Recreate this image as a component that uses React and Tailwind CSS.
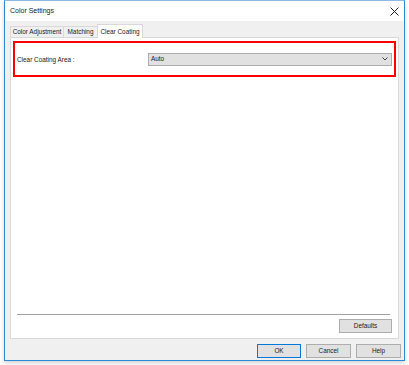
import React from 'react';

const font = { fontFamily: '"Liberation Sans", Arial, sans-serif' };

function Tab({ label, active, w }) {
  if (active) {
    return (
      <div className={`relative z-10 -mb-[1px] h-[14px] flex justify-center items-start pt-[2px] bg-white border border-b-0 border-[#d9d9d9] text-[6.4px] text-[#1a1a1a] ${w}`}>
        {label}
      </div>
    );
  }
  return (
    <div className={`h-[11px] flex justify-center items-center bg-[#f0f0f0] border border-b-0 border-[#d9d9d9] -mr-[1px] text-[6.4px] text-[#1a1a1a] ${w}`}>
      {label}
    </div>
  );
}

function Btn({ label, primary, w }) {
  return (
    <div
      className={`h-[14px] flex items-center justify-center text-[6.4px] text-[#1a1a1a] bg-[#e1e1e1] border ${primary ? 'border-[#0078d7]' : 'border-[#adadad]'} ${w}`}
    >
      {label}
    </div>
  );
}

export default function App() {
  return (
    <div className="w-[409px] h-[365px] bg-white" style={font}>
      <div className="ml-[4px] w-[401px] h-[361px] flex flex-col border border-[#2b8ad8] border-t-[#8cbbe8] shadow-[0_2px_4px_rgba(0,0,0,0.18)]">
        {/* title bar */}
        <div className="h-[20px] bg-white flex items-center justify-between pl-[5px] pr-[4px]">
          <span className="text-[7px] text-[#1a1a1a]">Color Settings</span>
          <svg width="9" height="9" viewBox="0 0 9 9" className="mr-[1px]">
            <path d="M0.5 0.5 L8.5 8.5 M8.5 0.5 L0.5 8.5" stroke="#222" strokeWidth="1" />
          </svg>
        </div>

        {/* body */}
        <div className="flex-1 bg-[#f0f0f0] flex flex-col pl-[5px] pr-[5px] pt-[2px]">
          <div className="h-[14px] flex items-end">
            <Tab label="Color Adjustment" w="w-[54px]" />
            <Tab label="Matching" w="w-[35px]" />
            <Tab label="Clear Coating" active w="w-[46px]" />
          </div>

          <div className="h-[302px] bg-white border border-[#d9d9d9] flex flex-col">
            <div className="mt-[3px] mx-[2px] h-[36px] border-2 border-[#ff0000] flex items-center pl-[2px] pr-[2px]">
              <span className="w-[131px] text-[6.4px] text-[#1a1a1a] mt-[1px]">Clear Coating Area :</span>
              <div className="flex-1 h-[13px] bg-[#e1e1e1] border border-[#adadad] flex items-center justify-between pl-[2px] pr-[3px]">
                <span className="text-[6.4px] text-[#1a1a1a]">Auto</span>
                <svg width="6" height="4" viewBox="0 0 6 4">
                  <path d="M0.5 0.5 L3 3 L5.5 0.5" stroke="#444" strokeWidth="1" fill="none" />
                </svg>
              </div>
            </div>

            <div className="flex-1" />

            <div className="ml-[6px] mr-[8px] border-t border-[#a0a0a0]" />
            <div className="flex justify-end mt-[4px] mr-[6px] mb-[5px]">
              <Btn label="Defaults" w="w-[53px]" />
            </div>
          </div>

          <div className="flex justify-end gap-[5px] mt-[5px] -mr-[2px]">
            <Btn label="OK" primary w="w-[44px]" />
            <Btn label="Cancel" w="w-[45px]" />
            <Btn label="Help" w="w-[45px]" />
          </div>
        </div>
      </div>
    </div>
  );
}
